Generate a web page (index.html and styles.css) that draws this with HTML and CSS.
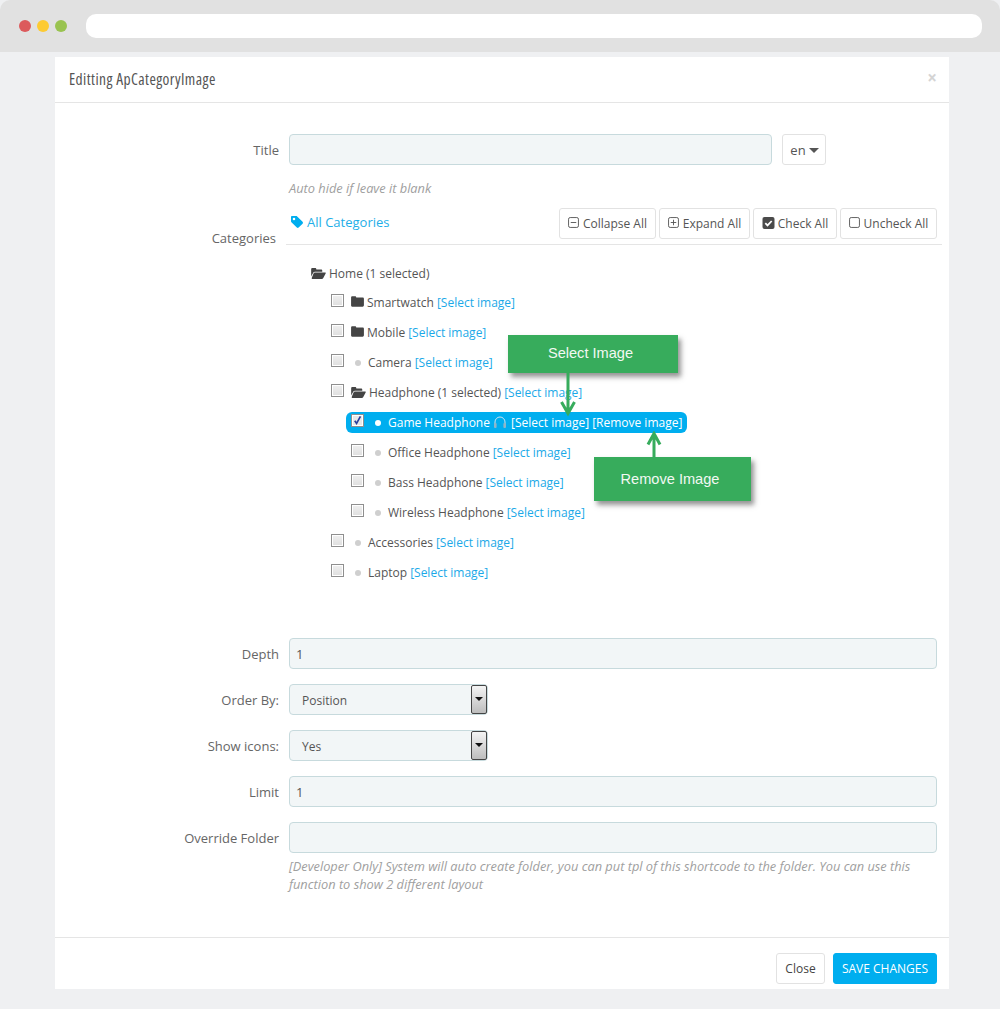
FILE: index.html
```html
<!DOCTYPE html>
<html lang="en">
<head>
<meta charset="utf-8">
<title>Editting ApCategoryImage</title>
<link rel="stylesheet" href="styles.css">
</head>
<body>
<svg class="sprites" width="0" height="0" aria-hidden="true">
  <symbol id="folder" viewBox="0 0 14 12"><path d="M0 1.6C0 .8.6.2 1.4.2h3c.7 0 1.2.5 1.2 1.2v.3h7c.8 0 1.4.6 1.4 1.4v7.1c0 .8-.6 1.4-1.4 1.4H1.4C.6 11.8 0 11.2 0 10.4z"/></symbol>
  <symbol id="folder-open" viewBox="0 0 16 12"><path d="M0 1.4C0 .6.6 0 1.4 0h3c.7 0 1.2.5 1.2 1.2v.3h5.2c.8 0 1.3.6 1.3 1.3V4H4.2c-.9 0-1.6.5-2 1.2L0 9.2z"/><path d="M4 5h11.2c.6 0 .9.5.6 1l-2.6 4.9c-.3.6-.9 1-1.6 1H1.2c-.6 0-.9-.5-.6-1l2-4.9C2.9 5.4 3.4 5 4 5z"/></symbol>
</svg>

<header class="chrome">
  <span class="dot dot-red"></span><span class="dot dot-yellow"></span><span class="dot dot-green"></span>
  <div class="urlbar"></div>
</header>

<main class="modal">
  <div class="modal-head">
    <h4 class="modal-title">Editting ApCategoryImage</h4>
    <span class="modal-x">×</span>
  </div>

  <div class="modal-body">
    <div class="row">
      <label class="label">Title</label>
      <div class="field field-lang">
        <input class="input input-title" type="text">
        <button class="btn btn-lang">en<span class="caret"></span></button>
      </div>
    </div>
    <p class="help help-title">Auto hide if leave it blank</p>

    <div class="row row-cat">
      <label class="label label-cat">Categories</label>
      <div class="cat">
        <div class="cat-head">
          <a class="all-cat">
            <svg class="i-tag" viewBox="0 0 14 14"><path fill-rule="evenodd" d="M1 0h5c.5 0 .9.2 1.2.5l6.3 6.3c.6.6.6 1.5 0 2.1l-4.600 4.600c-.6.6-1.500.6-2.100 0L.5 7.200C.2 6.900 0 6.500 0 6V1C0 .4.4 0 1 0zm2.500 2A1.500 1.500 0 1 0 3.500 5 1.500 1.500 0 0 0 3.500 2z"/></svg>
            All Categories
          </a>
          <div class="cat-btns">
            <button class="btn btn-tool btn-collapse"><svg class="i-box" viewBox="0 0 12 12"><rect x=".6" y=".6" width="10.800" height="10.800" rx="1.800"/><path d="M3 6h6"/></svg>Collapse All</button>
            <button class="btn btn-tool btn-expand"><svg class="i-box" viewBox="0 0 12 12"><rect x=".6" y=".6" width="10.800" height="10.800" rx="1.800"/><path d="M3 6h6M6 3v6"/></svg>Expand All</button>
            <button class="btn btn-tool btn-check"><svg class="i-solid" viewBox="0 0 12 12"><rect width="12" height="12" rx="2" fill="#4a4a4a"/><path d="M2.800 6.200l2.200 2.200 4.200-4.400" fill="none" stroke="#fff" stroke-width="1.800"/></svg>Check All</button>
            <button class="btn btn-tool btn-uncheck"><svg class="i-box" viewBox="0 0 12 12"><rect x=".6" y=".6" width="10.800" height="10.800" rx="1.800"/></svg>Uncheck All</button>
          </div>
        </div>

        <ul class="tree">
          <li class="node node-home"><svg class="i-fo"><use href="#folder-open"/></svg>Home (1 selected)</li>
          <li class="node l2"><span class="cb"></span><svg class="i-f"><use href="#folder"/></svg>Smartwatch <a class="sel">[Select image]</a></li>
          <li class="node l2"><span class="cb"></span><svg class="i-f"><use href="#folder"/></svg>Mobile <a class="sel">[Select image]</a></li>
          <li class="node l2"><span class="cb"></span><span class="bullet"></span>Camera <a class="sel">[Select image]</a></li>
          <li class="node l2"><span class="cb"></span><svg class="i-fo i-fo2"><use href="#folder-open"/></svg>Headphone (1 selected) <a class="sel">[Select image]</a></li>
          <li class="node l3 active">
            <span class="cb cb-on"><svg viewBox="0 0 12 12"><path d="M3 6.200l2 3L9.200 1.500" fill="none" stroke="#2b3f9c" stroke-width="1.800"/></svg></span><span class="bullet"></span>Game Headphone
            <svg class="i-head" viewBox="0 0 14 14"><path d="M2 9V7a5 5 0 0 1 10 0v2" fill="none" stroke="#cfe3ee" stroke-width="1"/><rect x="1" y="8" width="2.600" height="5" rx="1" fill="#8fb6c9"/><rect x="10.400" y="8" width="2.600" height="5" rx="1" fill="#8fb6c9"/></svg>
            <a class="sel">[Select image]</a> <a class="sel">[Remove image]</a>
          </li>
          <li class="node l3"><span class="cb"></span><span class="bullet"></span>Office Headphone <a class="sel">[Select image]</a></li>
          <li class="node l3"><span class="cb"></span><span class="bullet"></span>Bass Headphone <a class="sel">[Select image]</a></li>
          <li class="node l3"><span class="cb"></span><span class="bullet"></span>Wireless Headphone <a class="sel">[Select image]</a></li>
          <li class="node l2"><span class="cb"></span><span class="bullet"></span>Accessories <a class="sel">[Select image]</a></li>
          <li class="node l2"><span class="cb"></span><span class="bullet"></span>Laptop <a class="sel">[Select image]</a></li>
        </ul>
      </div>
    </div>

    <div class="row row-depth">
      <label class="label">Depth</label>
      <div class="field"><input class="input" type="text" value="1"></div>
    </div>
    <div class="row">
      <label class="label">Order By:</label>
      <div class="field"><div class="select">Position<span class="select-arrow"></span></div></div>
    </div>
    <div class="row">
      <label class="label">Show icons:</label>
      <div class="field"><div class="select">Yes<span class="select-arrow"></span></div></div>
    </div>
    <div class="row">
      <label class="label">Limit</label>
      <div class="field"><input class="input" type="text" value="1"></div>
    </div>
    <div class="row row-last">
      <label class="label">Override Folder</label>
      <div class="field"><input class="input" type="text"></div>
    </div>
    <p class="help help-dev">[Developer Only] System will auto create folder, you can put tpl of this shortcode to the folder. You can use this function to show 2 different layout</p>
  </div>

  <div class="modal-foot">
    <button class="btn btn-close">Close</button>
    <button class="btn btn-save">SAVE CHANGES</button>
  </div>

  <div class="callout callout-select">Select Image</div>
  <svg class="arrow arrow-select" viewBox="0 0 16 44"><path d="M8 0V40M1.500 29L8 40.500 14.500 29" fill="none" stroke="#37ac5c" stroke-width="3"/></svg>
  <div class="callout callout-remove">Remove Image</div>
  <svg class="arrow arrow-remove" viewBox="0 0 16 26"><path d="M8 26V3M2 13.500L8 2.500 14 13.500" fill="none" stroke="#37ac5c" stroke-width="3"/></svg>
</main>
</body>
</html>
```
FILE: styles.css
```css
* { box-sizing: border-box; }
html, body { margin: 0; padding: 0; }
body {
  width: 1000px;
  height: 1009px;
  overflow: hidden;
  background: #eff0f2;
  font-family: "Open Sans", "Noto Sans", sans-serif;
  font-size: 13px;
  color: #555;
}
.sprites { position: absolute; }

.chrome {
  height: 52px;
  background: #e1e1e1;
  border-top-left-radius: 10px;
  border-top-right-radius: 10px;
  display: flex;
  align-items: center;
  padding-left: 19px;
  gap: 6px;
}
.dot { width: 12px; height: 12px; border-radius: 50%; }
.dot-red { background: #dc5a5c; }
.dot-yellow { background: #fdcb33; }
.dot-green { background: #99c350; }
.urlbar {
  width: 896px;
  height: 24px;
  margin-left: 13px;
  background: #fff;
  border-radius: 10px;
}

.modal {
  position: relative;
  width: 894px;
  height: 932px;
  margin: 5px 0 0 55px;
  background: #fff;
  display: flex;
  flex-direction: column;
}
.modal-head {
  height: 46px;
  flex: none;
  padding: 0 12px 2px 14px;
  border-bottom: 1px solid #e5e5e5;
  display: flex;
  align-items: center;
  justify-content: space-between;
}
.modal-title {
  margin: 0;
  font-family: "Open Sans", "Noto Sans", sans-serif;
  font-stretch: 75%;
  font-size: 15.500px;
  font-weight: 500;
  letter-spacing: .42px;
  color: #555;
}
.modal-x { font-size: 17px; font-weight: 700; color: #d4d4d4; line-height: 1; margin-top: -3px; }

.modal-body { padding: 31px 12px 0 0; flex: 1; }
.row { display: flex; align-items: center; margin-bottom: 15px; }
.label { width: 224px; flex: none; text-align: right; color: #666; }
.field { flex: 1; margin-left: 10px; }
.field-lang { display: flex; gap: 10px; }
.input {
  display: block;
  width: 100%;
  height: 31px;
  padding: 0 6px;
  background: #f2f6f7;
  border: 1px solid #c7dadd;
  border-radius: 4px;
  font: inherit;
  color: #555;
}
.input-title { width: 483px; }

.btn {
  font: inherit;
  font-size: 12px;
  color: #555;
  background: #fff;
  border: 1px solid #e2e2e2;
  border-radius: 3px;
  padding: 0;
  height: 31px;
}
.btn-lang { width: 44px; font-size: 13px; padding-left: 1px; }
.caret {
  display: inline-block;
  width: 0;
  height: 0;
  margin-left: 3px;
  vertical-align: 2px;
  border: 5px solid transparent;
  border-top-color: #555;
  border-bottom: 0;
}

.help { margin: 0; font-style: italic; color: #a0a0a0; font-size: 12.800px; }
.help-title { margin: 15px 0 0 234px; line-height: 17px; }
.help-dev { margin: -11px 0 0 234px; width: 630px; line-height: 18px; }

.row-cat { align-items: flex-start; margin: 11px 0 0; }
.label-cat { width: 221px; margin-top: 21px; }
.cat { width: 656px; flex: none; margin-left: 10px; }
.cat-head {
  display: flex;
  justify-content: space-between;
  padding: 0 5px 5px 5px;
  border-bottom: 1px solid #e5e5e5;
}
.all-cat { color: #1eaee8; margin-top: 4px; font-size: 13px; display: flex; align-items: center; height: 19px; gap: 4px; }
.i-tag { width: 12px; height: 12px; fill: #00aeef; }
.cat-btns { display: flex; gap: 3px; }
.btn-tool {
  height: 31px;
  display: flex;
  align-items: center;
  justify-content: center;
  gap: 4px;
  white-space: nowrap;
}
.btn-collapse { width: 97px; }
.btn-expand { width: 91px; }
.btn-check { width: 84px; gap: 3px; }
.btn-uncheck { width: 97px; }
.i-box { width: 11px; height: 11px; fill: none; stroke: #555; stroke-width: 1; flex: none; margin-top: -2px; }
.i-solid { width: 13px; height: 12px; flex: none; margin-top: -1px; }

.tree { list-style: none; margin: 13px 0 0; padding: 0; width: 400px; }
.node {
  height: 30px;
  display: flex;
  align-items: center;
  white-space: nowrap;
  color: #555;
  font-size: 12px;
}
.node-home { height: 29px; padding-left: 25px; padding-top: 2px; }
.l2 { padding-left: 45px; }
.l3 { padding-left: 65px; }
.sel { color: #1ba9e8; margin-left: 3px; }
.cb {
  width: 13px;
  height: 13px;
  flex: none;
  margin-top: -4px;
  border: 1px solid #8f8f8f;
  background: linear-gradient(#f0f0f0, #dedede);
  box-shadow: inset 0 0 0 1px #fff;
  margin-right: 7px;
  display: flex;
}
.cb svg { width: 11px; height: 11px; }
.cb-on { background: #e8e8e8; }
.i-f { width: 13px; height: 11px; fill: #444; margin-right: 3px; flex: none; margin-top: -2px; }
.i-fo { width: 15px; height: 11px; fill: #444; margin-right: 3px; flex: none; }
.i-fo2 { margin-right: 3px; }
.bullet {
  width: 6px;
  height: 6px;
  border-radius: 50%;
  background: #cfcfcf;
  margin: 2px 7px 0 4px;
  flex: none;
}
.active {
  position: relative;
  z-index: 1;
}
.active::before {
  content: "";
  position: absolute;
  left: 60px;
  top: 5px;
  width: 341px;
  height: 21px;
  border-radius: 6px;
  background: #00aeef;
  z-index: -1;
}
.active, .active .sel { color: #fff; }
.active .bullet { background: #fff; }
.i-head { width: 14px; height: 14px; margin: 0 1px 0 3px; flex: none; }

.row-depth { margin-top: 51px; }
.select {
  position: relative;
  width: 199px;
  height: 31px;
  padding: 1px 12px 0;
  display: flex;
  align-items: center;
  font-size: 12px;
  background: #f2f6f7;
  border: 1px solid #c7dadd;
  border-radius: 4px;
}
.select-arrow {
  position: absolute;
  right: 0;
  top: 0;
  width: 16px;
  height: 29px;
  border: 1px solid #444;
  border-radius: 2px;
  background: linear-gradient(#f4f4f4, #bdbdbd);
}
.select-arrow::after {
  content: "";
  position: absolute;
  left: 3px;
  top: 11px;
  border: 4px solid transparent;
  border-top-color: #111;
  border-bottom: 0;
}

.modal-foot {
  flex: none;
  height: 52px;
  padding: 15px 12px 0;
  border-top: 1px solid #e5e5e5;
  display: flex;
  justify-content: flex-end;
  gap: 8px;
}
.btn-close { width: 49px; color: #444; }
.btn-save { width: 104px; background: #00aeef; border-color: #00aeef; color: #fff; }

.callout {
  position: absolute;
  background: #37ac5c;
  color: #f2f8f3;
  font-family: "Liberation Sans", Arial, sans-serif;
  font-size: 14.600px;
  display: flex;
  align-items: center;
  justify-content: center;
  padding: 0 5px 2px 0;
  box-shadow: 3px 4px 5px rgba(60, 60, 60, .55);
  z-index: 3;
}
.callout-select { left: 453px; top: 278px; width: 170px; height: 38px; }
.callout-remove { left: 539px; top: 400px; width: 157px; height: 44px; padding-bottom: 0; }
.arrow { position: absolute; z-index: 4; }
.arrow-select { left: 505px; top: 316px; width: 16px; height: 44px; }
.arrow-remove { left: 591px; top: 374px; width: 16px; height: 26px; }
```
